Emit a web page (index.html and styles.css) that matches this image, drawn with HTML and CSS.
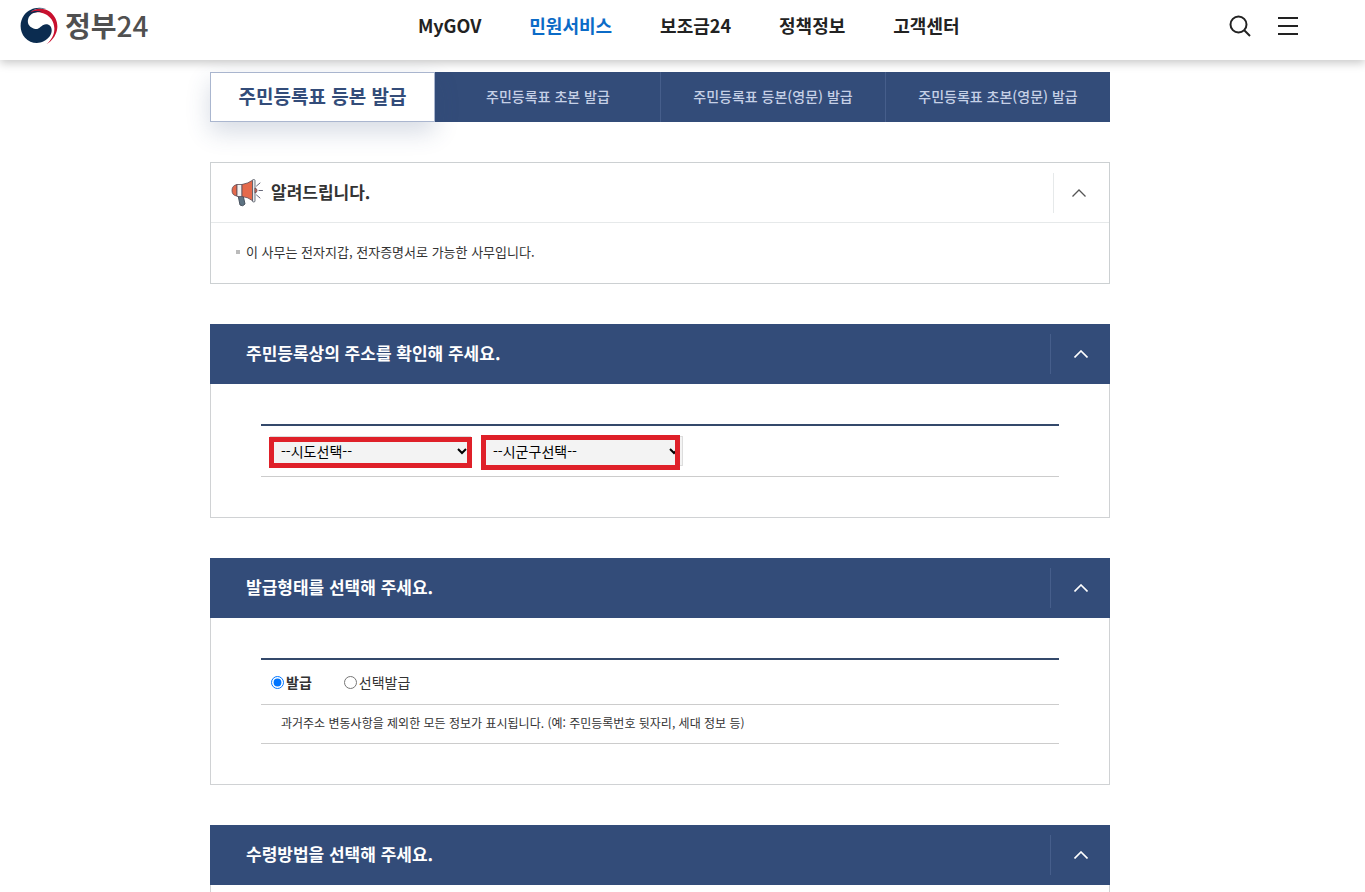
FILE: index.html
```html
<!DOCTYPE html>
<html lang="ko">
<head>
    <meta charset="UTF-8">
    <meta name="viewport" content="width=device-width, initial-scale=1.0">
    <title>정부24</title>
    <link rel="stylesheet" href="styles.css">
</head>
<body>

    <header class="header">
        <a class="logo" href="#">
            <svg width="38" height="38" viewBox="0 0 114 114" aria-hidden="true">
                <path fill="#c8102e" d="M24 20C42 2 72 1 90 14C108 28 115 49 111 69C107 87 95 103 79 112C95 98 104 81 103 63C102 44 92 29 75 21C59 14 40 14 24 24Z"/>
                <path fill="#0b2c50" d="M78 6C54 -3 27 5 12 25C-3 46 -1 74 15 92C29 108 53 112 71 103C87 95 96 82 95 68C94 54 80 49 70 54C61 58 58 67 47 66C32 64 21 53 24 38C28 20 46 13 68 16C55 10 40 11 30 17C41 6 59 2 78 6Z"/>
            </svg>
            <span><b>정부</b>24</span>
        </a>
        <nav class="menu">
            <a href="#">MyGOV</a>
            <a href="#" class="active">민원서비스</a>
            <a href="#">보조금24</a>
            <a href="#">정책정보</a>
            <a href="#">고객센터</a>
        </nav>
        <div class="tools">
            <button type="button" aria-label="검색">
                <svg width="22" height="22" viewBox="0 0 22 22" fill="none" stroke="#222" stroke-width="2">
                    <circle cx="9.500" cy="9.500" r="8"/>
                    <path d="M15 15L21 21"/>
                </svg>
            </button>
            <button type="button" aria-label="전체메뉴">
                <svg width="20" height="18" viewBox="0 0 20 18" fill="#222">
                    <path d="M0 0H20V2H0ZM0 8H20V10H0ZM0 16H20V18H0Z"/>
                </svg>
            </button>
        </div>
    </header>

    <main class="content">
        <nav class="tabs">
            <a href="#" class="active">주민등록표 등본 발급</a>
            <a href="#">주민등록표 초본 발급</a>
            <a href="#">주민등록표 등본(영문) 발급</a>
            <a href="#">주민등록표 초본(영문) 발급</a>
        </nav>

        <!-- Notice -->
        <section class="notice">
            <div class="notice-head">
                <svg width="32" height="28" viewBox="0 0 32 28" aria-hidden="true">
                    <path fill="#5d7383" stroke="#48525f" d="M7 16H12L14 25Q12 28 9 26Z"/>
                    <path fill="#e5694b" stroke="#5b4b55" stroke-width=".8" d="M6 5.500Q1 6.500 1 11.500Q1 16.500 6 17Z"/>
                    <path fill="#f3f1f0" stroke="#5b4b55" stroke-width=".8" d="M6 5.500H11V17.500H6Z"/>
                    <path fill="#e5694b" stroke="#5b4b55" stroke-width=".8" d="M11 5.500Q17 4.500 22 1V22Q17 18 11 17.500Z"/>
                    <path fill="#e9e9ec" stroke="#4d5661" stroke-width=".8" d="M21.500 1.500Q21.500 .5 22.700 .5Q24 .5 24 1.500V22Q24 23 22.700 23Q21.500 23 21.500 22Z"/>
                    <path fill="#e5694b" stroke="#5b4b55" stroke-width=".8" d="M24 9Q26 9.500 26 11.500Q26 13.500 24 14Z"/>
                    <path fill="none" stroke="#666879" stroke-linecap="round" d="M25.500 7L29 4M28 11.500H31.500M25.500 16L29 19"/>
                </svg>
                <h2>알려드립니다.</h2>
                <button type="button" class="toggle" aria-label="접기">
                    <svg width="14" height="8" viewBox="0 0 14 8" fill="none" stroke="#555" stroke-width="1.300"><path d="M.5 7.500L7 1L13.500 7.500"/></svg>
                </button>
            </div>
            <ul>
                <li>이 사무는 전자지갑, 전자증명서로 가능한 사무입니다.</li>
            </ul>
        </section>

        <!-- Address -->
        <section class="panel">
            <div class="panel-head">
                <h2>주민등록상의 주소를 확인해 주세요.</h2>
                <button type="button" class="toggle" aria-label="접기">
                    <svg width="14" height="8" viewBox="0 0 14 8" fill="none" stroke="currentColor" stroke-width="1.600"><path d="M.5 7.500L7 1L13.500 7.500"/></svg>
                </button>
            </div>
            <div class="panel-body">
                <div class="rows">
                    <div class="row row-address">
                        <div class="field">
                            <select aria-label="시도">
                                <option>--시도선택--</option>
                            </select>
                            <span class="mark"></span>
                        </div>
                        <div class="field">
                            <select aria-label="시군구">
                                <option>--시군구선택--</option>
                            </select>
                            <span class="mark mark-tall"></span>
                        </div>
                    </div>
                </div>
            </div>
        </section>

        <!-- Issue type -->
        <section class="panel">
            <div class="panel-head">
                <h2>발급형태를 선택해 주세요.</h2>
                <button type="button" class="toggle" aria-label="접기">
                    <svg width="14" height="8" viewBox="0 0 14 8" fill="none" stroke="currentColor" stroke-width="1.600"><path d="M.5 7.500L7 1L13.500 7.500"/></svg>
                </button>
            </div>
            <div class="panel-body">
                <div class="rows">
                    <div class="row row-type">
                        <label><input type="radio" name="type" checked><span>발급</span></label>
                        <label><input type="radio" name="type"><span>선택발급</span></label>
                    </div>
                    <p class="row row-info">과거주소 변동사항을 제외한 모든 정보가 표시됩니다. (예: 주민등록번호 뒷자리, 세대 정보 등)</p>
                </div>
            </div>
        </section>

        <!-- Delivery -->
        <section class="panel panel-last">
            <div class="panel-head">
                <h2>수령방법을 선택해 주세요.</h2>
                <button type="button" class="toggle" aria-label="접기">
                    <svg width="14" height="8" viewBox="0 0 14 8" fill="none" stroke="currentColor" stroke-width="1.600"><path d="M.5 7.500L7 1L13.500 7.500"/></svg>
                </button>
            </div>
        </section>
    </main>

</body>
</html>
```

FILE: styles.css
```css
* {
    box-sizing: border-box;
}
body {
    margin: 0;
    min-height: 100vh;
    display: flex;
    flex-direction: column;
    background: #fff;
    color: #333;
    font-family: "Noto Sans CJK KR", sans-serif;
    font-size: 14px;
    line-height: 20px;
}
a {
    color: inherit;
    text-decoration: none;
}
h2, p, ul {
    margin: 0;
    padding: 0;
}
h2 {
    padding-bottom: 2px;
    font-size: 17px;
    line-height: 24px;
    font-weight: 700;
}
button {
    padding: 0;
    border: 0;
    background: none;
    color: inherit;
    cursor: pointer;
}
svg {
    display: block;
}

/* Header */
.header {
    position: relative;
    z-index: 2;
    display: flex;
    justify-content: space-between;
    align-items: center;
    height: 60px;
    padding: 0 67px 8px 20px;
    background: #fff;
    box-shadow: 0 3px 9px rgba(0, 0, 0, 0.22);
}
.logo {
    display: flex;
    align-items: center;
    gap: 7px;
    color: #505050;
    font-size: 28px;
    line-height: 40px;
    font-weight: 500;
}
.logo span {
    padding-bottom: 2px;
}
.menu {
    display: flex;
    gap: 48px;
    padding-bottom: 2px;
    color: #222;
    font-size: 18px;
    line-height: 28px;
    font-weight: 700;
}
.menu .active {
    color: #0b6bc7;
}
.tools {
    display: flex;
    align-items: center;
    gap: 27px;
}

/* Tabs */
.content {
    flex: 1;
    display: flex;
    flex-direction: column;
    gap: 40px;
    width: 100%;
    max-width: 945px;
    margin: 0 auto;
    padding: 12px 45px 0 0;
}
.tabs {
    display: grid;
    grid-template-columns: repeat(4, 1fr);
    background: #334c79;
}
.tabs a {
    display: flex;
    align-items: center;
    justify-content: center;
    height: 50px;
    padding-bottom: 2px;
    border-left: 1px solid #465e8b;
    color: #c6d0e6;
    font-weight: 500;
}
.tabs .active {
    border: 1px solid #aab6cf;
    background: #fff;
    color: #334c79;
    font-size: 19px;
    font-weight: 700;
    box-shadow: 0 10px 24px rgba(51, 76, 121, 0.2);
}
.tabs .active + a {
    border-left-color: #334c79;
}

/* Notice */
.notice {
    border: 1px solid #ccd0d2;
}
.notice-head {
    display: flex;
    align-items: center;
    gap: 8px;
    height: 60px;
    padding-left: 20px;
    border-bottom: 1px solid #e6e9ea;
}
.notice ul {
    padding: 19px 25px 21px;
    list-style: none;
    font-size: 13px;
}
.notice li {
    display: flex;
    align-items: center;
    gap: 6px;
}
.notice li::before {
    content: "";
    width: 4px;
    height: 4px;
    background: #bbb;
}
.toggle {
    display: flex;
    align-items: center;
    justify-content: center;
    width: 60px;
    height: 40px;
    margin-left: auto;
    border-left: 1px solid #465e8b;
}
.notice .toggle {
    width: 56px;
    padding-right: 6px;
    border-left-color: #e6e9ea;
}

/* Panels */
.panel-head {
    display: flex;
    align-items: center;
    height: 60px;
    padding-left: 36px;
    background: #334c79;
    color: #fff;
}
.panel-body {
    padding: 40px 50px;
    border: 1px solid #d0d2d4;
    border-top: 0;
}
.panel-last {
    flex: 1;
    border: 1px solid #d0d2d4;
    border-width: 0 1px;
}
.panel-last .panel-head {
    margin: 0 -1px;
}
.rows {
    border-top: 2px solid #34496b;
}
.row {
    border-bottom: 1px solid #ccc;
}
.row-address {
    display: flex;
    gap: 11px;
    padding: 10px 9px;
}
.row-type {
    display: flex;
    gap: 32px;
    padding: 12px 10px;
}
.row-type label {
    display: flex;
    align-items: center;
    gap: 2px;
}
.row-type input {
    width: 13px;
    height: 13px;
    margin: 0;
}
.row-type input:checked + span {
    font-weight: 700;
}
.row-info {
    padding: 8px 20px 10px;
    font-size: 12px;
}

/* Select boxes with highlight frame */
.field {
    position: relative;
}
.field select {
    display: block;
    width: 201px;
    height: 30px;
    padding: 0 6px;
    border: 1px solid #ddd;
    border-radius: 0;
    background: #f3f3f3;
    color: #000;
    font-family: inherit;
    font-size: 14px;
}
.mark {
    position: absolute;
    top: 1px;
    right: -1px;
    bottom: -2px;
    left: -1px;
    border: 5px solid #df2029;
    pointer-events: none;
}
.mark-tall {
    top: -1px;
    right: 3px;
    bottom: -4px;
}
```
